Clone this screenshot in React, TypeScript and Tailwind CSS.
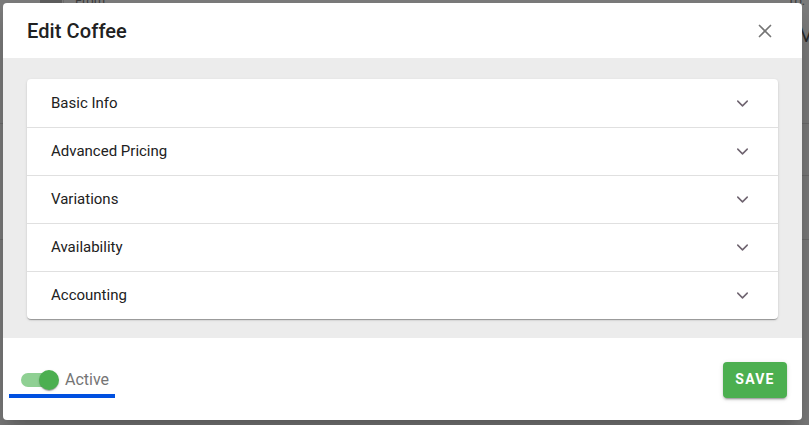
import { X, ChevronDown } from 'lucide-react'

const sections = ['Basic Info', 'Advanced Pricing', 'Variations', 'Availability', 'Accounting']

function BackPage() {
  // the table page that sits under the dimmed backdrop
  return (
    <div className="w-[809px] h-[425px] flex flex-col">
      <div className="h-[124px] flex border-b border-[#6c6c6c]">
        <div className="w-[64px] border-r border-[#6c6c6c] pl-[40px]">
          <div className="w-[22px] h-[8px] bg-[#5e5e5e]" />
        </div>
        <div className="flex-1 flex justify-between -mt-[9px] pl-[11px] pr-[4px]">
          <span className="text-[13px] text-[#3d3d3d]">From:</span>
          <div className="flex flex-col items-end">
            <span className="text-[13px] text-[#3d3d3d]">To:</span>
            <span className="text-[20px] leading-none text-[#2a2a2a] -mr-[10px] mt-[14px]">M</span>
          </div>
        </div>
      </div>
      <div className="h-[52px] border-b border-[#6c6c6c] ml-[64px]" />
      <div className="h-[64px] border-b border-[#6c6c6c]" />
      <div className="flex-1" />
    </div>
  )
}

export default function App() {
  return (
    <div
      className="relative w-[809px] h-[425px] overflow-hidden bg-[#7b7b7b]"
      style={{ fontFamily: 'Roboto, "Liberation Sans", sans-serif' }}
    >
      <BackPage />

      {/* dialog over the backdrop */}
      <div className="absolute left-[3px] top-[3px] w-[799px] h-[417px] bg-white rounded-[4px] shadow-[0_11px_15px_-7px_rgba(0,0,0,0.2),0_24px_38px_3px_rgba(0,0,0,0.14)] flex flex-col overflow-hidden">
        <div className="h-[55px] flex items-center justify-between pl-[24px] pr-[26px] shrink-0">
          <h2 className="text-[20px] font-medium text-[#212121] tracking-[0.1px]">Edit Coffee</h2>
          <X size={22} strokeWidth={1.8} className="text-[#757575]" />
        </div>

        <div className="h-[280px] bg-[#ececec] px-[24px] pt-[21px] shrink-0">
          <div className="bg-white rounded-[4px] shadow-[0_2px_1px_-1px_rgba(0,0,0,0.2),0_1px_1px_0_rgba(0,0,0,0.14),0_1px_3px_0_rgba(0,0,0,0.12)]">
            {sections.map((s, i) => (
              <div
                key={s}
                className={`h-[48px] flex items-center justify-between pl-[24px] pr-[26px] ${i > 0 ? 'border-t border-[#e0e0e0]' : ''}`}
              >
                <span className="text-[15px] text-[#212121]">{s}</span>
                <ChevronDown size={19} strokeWidth={1.9} className="text-[#6f6470]" />
              </div>
            ))}
          </div>
        </div>

        <div className="flex-1 flex items-center justify-between pl-[6px] pr-[15px]">
          <div className="flex items-center gap-[8px] pl-[12px] pr-[6px] pb-[4px] mt-[10px] border-b-4 border-[#0050e0]">
            <div className="relative w-[36px] h-[20px] flex items-center">
              <div className="w-[36px] h-[14px] rounded-full bg-[#8fd093]" />
              <div className="absolute right-[-2px] top-0 w-[20px] h-[20px] rounded-full bg-[#4caf50] shadow-[0_2px_1px_-1px_rgba(0,0,0,0.2),0_1px_1px_0_rgba(0,0,0,0.14),0_1px_3px_0_rgba(0,0,0,0.12)]" />
            </div>
            <span className="text-[16px] leading-[20px] text-[#757575] -mt-[1px]">Active</span>
          </div>
          <button className="h-[36px] w-[64px] rounded-[4px] bg-[#4caf50] text-white text-[14px] font-bold tracking-[1.2px] mt-[1px] shadow-[0_3px_1px_-2px_rgba(0,0,0,0.2),0_2px_2px_0_rgba(0,0,0,0.14),0_1px_5px_0_rgba(0,0,0,0.12)]">
            SAVE
          </button>
        </div>
      </div>
    </div>
  )
}
